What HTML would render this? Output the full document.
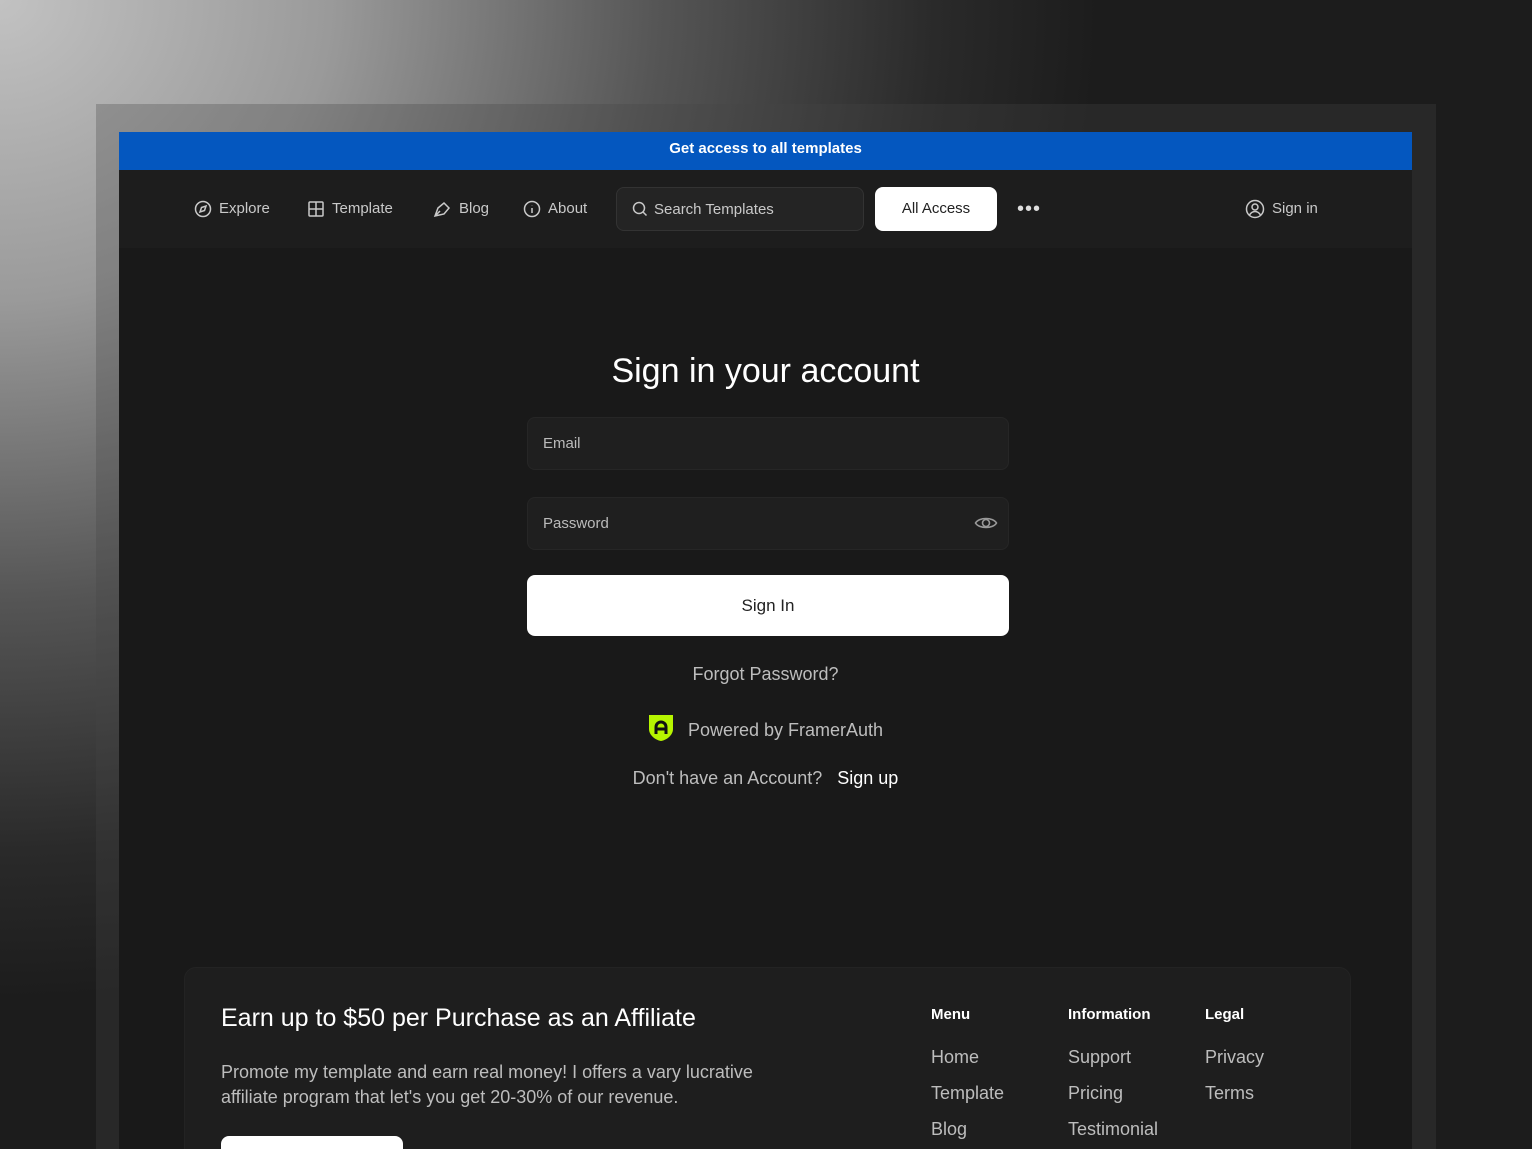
<!DOCTYPE html>
<html><head><meta charset="utf-8"><style>
*{margin:0;padding:0;box-sizing:border-box}
html{width:1532px;height:1149px;overflow:hidden}
body{width:1532px;height:1149px;overflow:hidden;font-family:"Liberation Sans",sans-serif;position:relative;
background:radial-gradient(ellipse 1100px 1000px at 0 0,#c2c2c2 0%,#9a9a9a 30%,#555 60%,#2a2a2a 85%,#1c1c1c 100%);}
.frame{position:absolute;left:96px;top:104px;width:1340px;height:1045px;background:rgba(70,70,70,.3)}
.page{position:absolute;left:119px;top:132px;width:1293px;height:1017px;background:#191919;overflow:hidden}
.banner{height:38px;background:#0457bf;color:#fff;font-size:15px;font-weight:bold;text-align:center;line-height:34px}
.nav{height:78px;background:#1d1d1d;position:relative;color:#c9c9c9;font-size:15px}
.nav .it{position:absolute;top:0;line-height:78px;display:flex;align-items:center;gap:7px}
.nav svg{stroke:#c9c9c9;fill:none;stroke-width:1.5}
.search{position:absolute;left:497px;top:17px;width:248px;height:44px;border:1px solid #333;background:#242424;border-radius:8px;display:flex;align-items:center;padding-left:15px;gap:6px}
.allacc{position:absolute;left:756px;top:17px;width:122px;height:44px;background:#fff;border-radius:8px;color:#222;text-align:center;line-height:44px}
h1{position:absolute;left:0;width:1293px;top:220px;text-align:center;color:#fff;font-size:34px;font-weight:normal}
.inp{position:absolute;left:408px;width:482px;height:53px;background:#1f1f1f;border:1px solid #262626;border-radius:8px;color:#bbb;font-size:15px;line-height:51px;padding-left:15px}
.btn{position:absolute;left:408px;top:443px;width:482px;height:61px;background:#fff;border-radius:8px;text-align:center;line-height:61px;color:#222;font-size:17px}
.c{position:absolute;left:0;width:1293px;text-align:center;color:#bdbdbd;font-size:18px}
.foot{position:absolute;left:65px;top:835px;width:1167px;height:220px;background:#1e1e1e;border:1px solid #232323;border-radius:12px}
.foot h2{position:absolute;left:36px;top:36px;font-size:25px;font-weight:normal;color:#fff}
.foot p{position:absolute;left:36px;top:92px;width:575px;font-size:18px;line-height:25px;color:#bdbdbd}
.col{position:absolute;top:38px;font-size:16px;color:#bdbdbd}
.col b{display:block;color:#fff;font-size:15px;margin-bottom:24px}
.col div{font-size:18px;height:36px}
.fb{position:absolute;left:36px;top:168px;width:182px;height:40px;background:#fff;border-radius:8px}
</style></head><body>
<div class="frame"></div>
<div class="page">
<div class="banner">Get access to all templates</div>
<div class="nav">
<div class="it" style="left:75px"><svg width="18" height="18" viewBox="0 0 18 18"><circle cx="9" cy="9" r="7.5"/><path d="M12 6l-1.5 4.5L6 12l1.5-4.5z"/></svg>Explore</div>
<div class="it" style="left:188px"><svg width="18" height="18" viewBox="0 0 18 18"><rect x="2" y="2" width="14" height="14" rx="1"/><path d="M9 2v14M2 9h14"/></svg>Template</div>
<div class="it" style="left:313px"><svg width="20" height="18" viewBox="0 0 20 18"><path d="M3 16l3-8 6-5 5 5-5 6z M3 16l5-5"/></svg>Blog</div>
<div class="it" style="left:404px"><svg width="18" height="18" viewBox="0 0 18 18"><circle cx="9" cy="9" r="7.5"/><path d="M9 8v5M9 5.2v.3"/></svg>About</div>
<div class="search"><svg width="16" height="16" viewBox="0 0 16 16"><circle cx="7" cy="7" r="5.5"/><path d="M11 11l3.5 3.5"/></svg>Search Templates</div>
<div class="allacc">All Access</div>
<div class="it" style="left:898px;font-size:20px;letter-spacing:1px;color:#ddd">•••</div>
<div class="it" style="left:1126px"><svg width="20" height="20" viewBox="0 0 20 20"><circle cx="10" cy="10" r="8.5"/><circle cx="10" cy="8" r="3"/><path d="M4.5 16c1.5-2.5 3.5-3.5 5.5-3.5s4 1 5.5 3.5"/></svg>Sign in</div>
</div>
<h1>Sign in your account</h1>
<div class="inp" style="top:285px">Email</div>
<div class="inp" style="top:365px">Password<svg style="position:absolute;right:10px;top:15px" width="24" height="20" viewBox="0 0 24 20" fill="none" stroke="#999" stroke-width="1.6"><path d="M1.5 10C5 4 19 4 22.5 10 19 16 5 16 1.5 10z"/><circle cx="12" cy="10" r="3.5"/></svg></div>
<div class="btn">Sign In</div>
<div class="c" style="top:532px">Forgot Password?</div>
<div class="c" style="top:582px"><svg style="vertical-align:-6px;margin-right:14px" width="26" height="28" viewBox="0 0 26 28"><path d="M1 1h24v14c0 6-6 11-12 12C7 26 1 21 1 15z" fill="#b6f500"/><path d="M8 20v-7a5 5 0 0 1 10 0v7M8 15h10" stroke="#111" stroke-width="3" fill="none"/></svg>Powered by FramerAuth</div>
<div class="c" style="top:636px">Don't have an Account? &nbsp; <span style="color:#fff">Sign up</span></div>
<div class="foot">
<h2>Earn up to $50 per Purchase as an Affiliate</h2>
<p>Promote my template and earn real money! I offers a vary lucrative affiliate program that let's you get 20-30% of our revenue.</p>
<div class="fb"></div>
<div class="col" style="left:746px"><b>Menu</b><div>Home</div><div>Template</div><div>Blog</div></div>
<div class="col" style="left:883px"><b>Information</b><div>Support</div><div>Pricing</div><div>Testimonial</div></div>
<div class="col" style="left:1020px"><b>Legal</b><div>Privacy</div><div>Terms</div></div>
</div>
</div>
</body></html>
